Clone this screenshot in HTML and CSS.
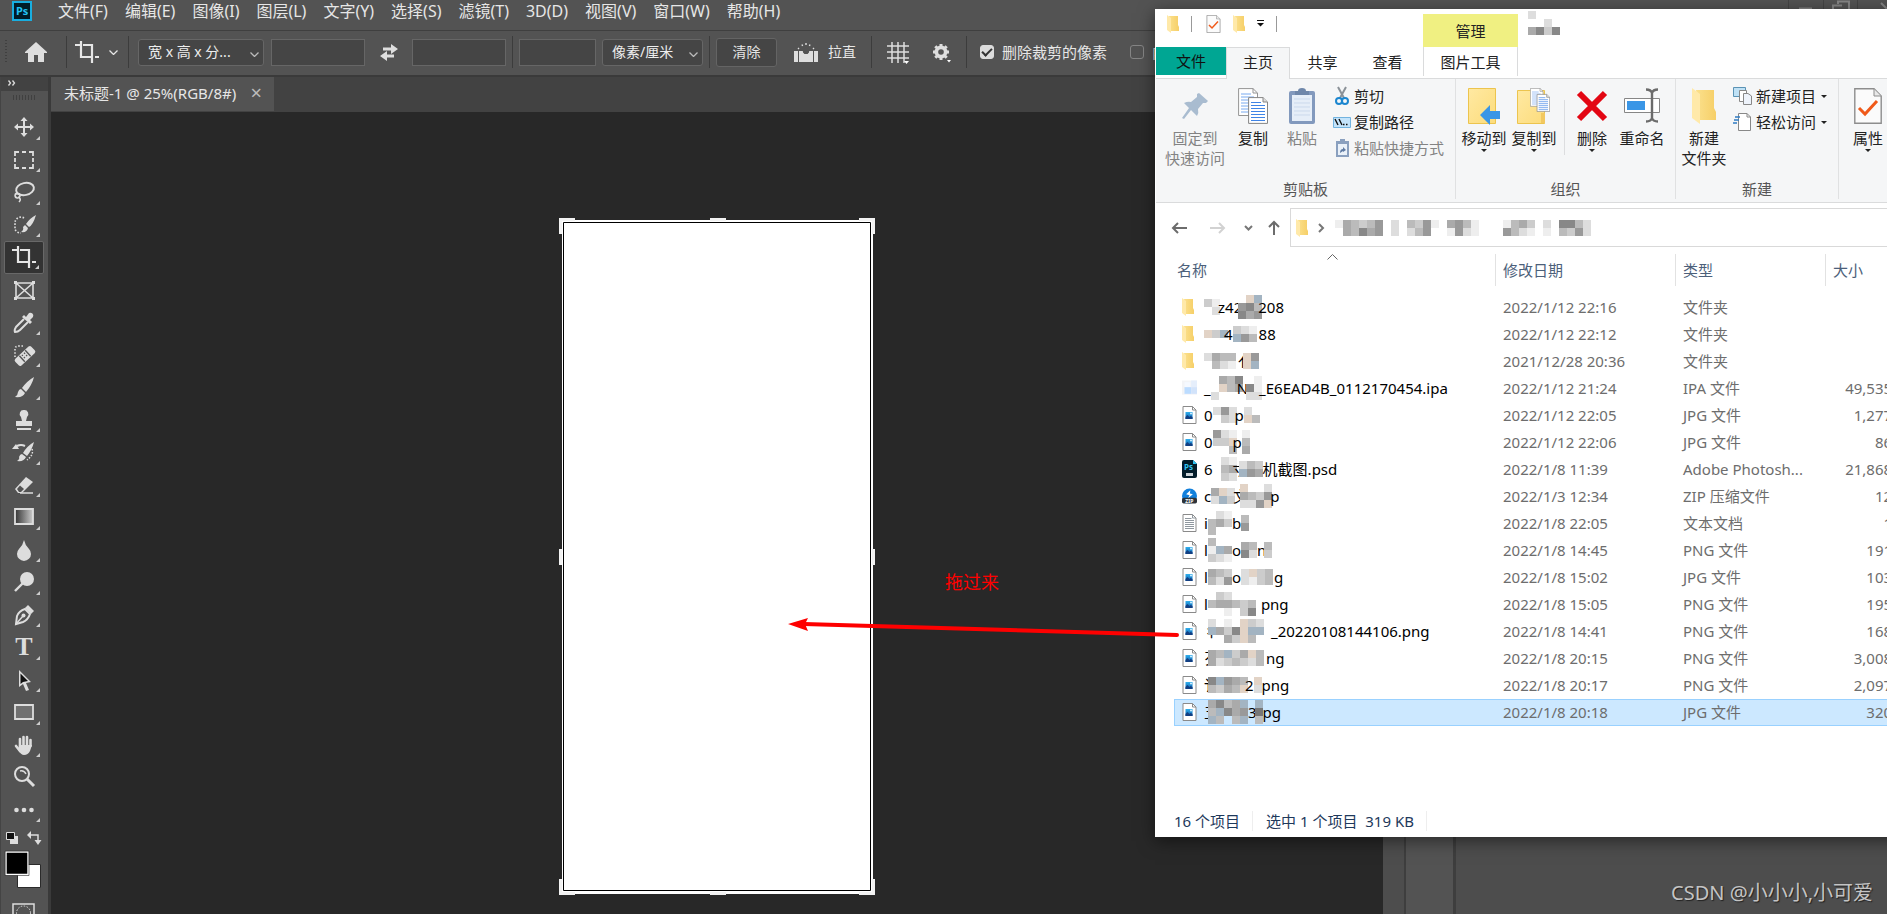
FILE: index.html
```html
<!DOCTYPE html>
<html lang="zh-CN">
<head>
<meta charset="utf-8">
<title>未标题-1</title>
<link rel="stylesheet" href="styles.css">
</head>
<body>
<svg width="0" height="0" class="defs" aria-hidden="true">
  <defs>
    <linearGradient id="gold" x1="0" x2="1"><stop offset="0" stop-color="#fbe08c"/><stop offset="1" stop-color="#f6cf68"/></linearGradient>
    <linearGradient id="sheet" x1="0" x2="1" y2="1"><stop offset="0" stop-color="#ffe9a2"/><stop offset="1" stop-color="#fcdc7c"/></linearGradient>
    <linearGradient id="fade" x1="0" x2="1"><stop offset="0" stop-color="#333"/><stop offset="1" stop-color="#ccc"/></linearGradient>
    <linearGradient id="sky" x1="0" y1="0" x2="0" y2="1"><stop offset="0" stop-color="#2fb0ee"/><stop offset="1" stop-color="#0c5cad"/></linearGradient>
    <symbol id="folder" viewBox="0 0 12 18"><path d="M2 1H11V10L12 12V16H4Z" fill="url(#gold)"/><path d="M0 0L4 3V18L0 15Z" fill="#ffe9a9"/></symbol>
    <symbol id="chevron" viewBox="0 0 9 5"><path d="M.5 .5L4.500 4.500L8.500 .5" fill="none" stroke="currentColor" stroke-width="1.300"/></symbol>
    <symbol id="crop" viewBox="0 0 24 22"><path d="M6 0V16H17M0 4H5M8 4H17V22M20 16H24" fill="none" stroke="currentColor" stroke-width="2.200"/></symbol>
    <symbol id="image" viewBox="0 0 14 18"><path d="M.5 .5H10L13.500 4V17.500H.5Z" fill="#fff" stroke="#8a8a8a"/><path d="M10 .5V4H13.500" fill="none" stroke="#8a8a8a"/><path d="M3 6H10V13H3Z" fill="url(#sky)"/><path d="M3 11L5 9L7 11L8 10L10 11V13H3Z" fill="#123f82"/><circle cx="8.500" cy="7.500" r="1" fill="#d8f2ff"/></symbol>
    <symbol id="text" viewBox="0 0 14 18"><path d="M.5 .5H10L13.500 4V17.500H.5Z" fill="#fff" stroke="#8a8a8a"/><path d="M10 .5V4H13.500M2.500 4.500H9M2.500 6.500H11.500M2.500 8.500H11.500M2.500 10.500H11.500M2.500 12.500H11.500M2.500 14.500H11.500" fill="none" stroke="#8f979e"/></symbol>
    <symbol id="psd" viewBox="0 0 15 18"><path d="M2 0H11L15 4V16A2 2 0 0 1 13 18H2A2 2 0 0 1 0 16V2A2 2 0 0 1 2 0Z" fill="#031d2b"/><path d="M11 0L15 4H11Z" fill="#2bc4f3"/><text x="2" y="10" font-size="8" font-weight="700" fill="#31c5f4">Ps</text><path d="M4 13H11V16H4Z" fill="#cbd3d8"/></symbol>
    <symbol id="zip" viewBox="0 0 18 18"><circle cx="9" cy="9" r="9" fill="#1280dc"/><path d="M10 2L5 7L9 8L7 12L13 7L9.500 6Z" fill="#fff"/><rect y="11" width="18" height="7" rx="2" fill="#2d3339"/><text x="4" y="17" font-size="6" font-weight="700" fill="#fff">ZIP</text></symbol>
    <symbol id="ipa" viewBox="0 0 18 18"><path d="M0 0H18V17H0Z" fill="#f3f4f6"/><path d="M3 2H10V8H3Z" fill="#f5f9ff"/><path d="M3 8H11V16H3Z" fill="#bcdcff"/><path d="M11 0H18V8H11Z" fill="#e5eefb"/><path d="M11 8H18V16H11Z" fill="#d2e3fa"/></symbol>
    <symbol id="checkdoc" viewBox="0 0 28 36"><path d="M.8 .8H20L27.200 8V35.200H.8Z" fill="#fbfbfb" stroke="#8d8d8d" stroke-width="1.400"/><path d="M20 1V8H27" fill="#e8e8e8" stroke="#8d8d8d"/><path d="M5 20L11 26L23 13" fill="none" stroke="#f05a1a" stroke-width="3"/></symbol>
    <symbol id="docs" viewBox="0 0 30 36"><path d="M.6 .6H15L19.500 5V27.500H.6Z" fill="#fff" stroke="#949494"/><path d="M15 .6V5H19.500" fill="none" stroke="#949494"/><path d="M3 6H13M3 9H16M3 12H16M3 15H16M3 18H16M3 21H16M3 24H16" stroke="#79aaf0"/><path d="M10.600 9.600H25L29.500 14V35.400H10.600Z" fill="#fff" stroke="#858585"/><path d="M25 9.600V14H29.500" fill="#ddd" stroke="#858585"/><path d="M13 14.500H23M13 17.500H27M13 20.500H27M13 23.500H27M13 26.500H27M13 29.500H27M13 32.500H27" stroke="#3f84e6"/></symbol>
    <symbol id="caret" viewBox="0 0 6 3"><path d="M0 0H6L3 3Z" fill="#222"/></symbol>
  </defs>
</svg>

<div class="app">
  <header class="menubar">
    <svg class="logo" width="20" height="20" viewBox="0 0 20 20"><rect x="1" y="1" width="18" height="18" fill="#001d29" stroke="#19aee0" stroke-width="2"/><text x="4" y="14" font-size="11" font-weight="700" fill="#22c3f5">Ps</text></svg>
    <nav class="menus">
      <button>文件(F)</button><button>编辑(E)</button><button>图像(I)</button><button>图层(L)</button><button>文字(Y)</button><button>选择(S)</button><button>滤镜(T)</button><button>3D(D)</button><button>视图(V)</button><button>窗口(W)</button><button>帮助(H)</button>
    </nav>
    <svg class="winctl" width="104" height="30" viewBox="0 0 104 30"><path d="M5.500 0V30M40.500 0V30M74.500 0V30" stroke="#444"/><path d="M16 8.500H29M50 14V5.500H59M55 4V1.500H66V9M98 3L110 15" fill="none" stroke="#858585" stroke-width="2"/></svg>
  </header>

  <section class="options" aria-label="裁剪选项">
    <span class="grip"></span>
    <button class="home" aria-label="主页"><svg width="22" height="20" viewBox="0 0 22 20"><path d="M11 0L22 10V11H19V20H13V13H9V20H3V11H0V10Z" fill="#dedede"/></svg></button>
    <i class="sep"></i>
    <button class="preset" aria-label="裁剪预设"><svg width="24" height="22"><use href="#crop"/></svg><svg width="9" height="5"><use href="#chevron"/></svg></button>
    <i class="sep"></i>
    <label class="pick pick-wide"><select aria-label="比例"><option>宽 x 高 x 分...</option></select><svg width="9" height="5"><use href="#chevron"/></svg></label>
    <input class="field" type="text" aria-label="宽度">
    <button class="swap" aria-label="交换高度和宽度"><svg width="18" height="17" viewBox="0 0 18 17"><path d="M11 0L18 5L11 10V6.500H3V3.500H11ZM7 7L0 12L7 17V13.500H14V10.500H7Z" fill="#dedede"/></svg></button>
    <input class="field" type="text" aria-label="高度">
    <i class="sep sep-tight"></i>
    <input class="field field-short" type="text" aria-label="分辨率">
    <label class="pick pick-unit"><select aria-label="单位"><option>像素/厘米</option></select><svg width="9" height="5"><use href="#chevron"/></svg></label>
    <i class="sep sep-tight"></i>
    <button class="clear">清除</button>
    <button class="level"><svg width="24" height="19" viewBox="0 0 24 19"><path d="M0 8H4V19H0ZM5 8H8L10 11H14L16 8H19V19H5ZM20 8H24V19H20Z" fill="#dedede"/><path d="M8 8A4 4 0 0 0 16 8" fill="none" stroke="#dedede" stroke-width="1.500"/><path d="M4 5L5 6M8 1.500L8.600 3M12 0V2M16 1.500L15.400 3M20 5L19 6" stroke="#dedede" stroke-width="1.400"/></svg>拉直</button>
    <i class="sep sep-wide"></i>
    <button aria-label="叠加选项"><svg width="22" height="23" viewBox="0 0 22 23"><path d="M5 1V22M11 1V22M17 1V22M0 5H22M0 11H22M0 17H22" stroke="#dedede" stroke-width="1.500"/><path d="M17 20H22L19.500 23Z" fill="#fff"/></svg></button>
    <button class="gear" aria-label="设置"><svg width="20" height="20" viewBox="0 0 20 20"><circle cx="10" cy="10" r="4.500" fill="none" stroke="#dedede" stroke-width="4"/><path d="M10 2V18M2 10H18M4.300 4.300L15.700 15.700M15.700 4.300L4.300 15.700" stroke="#dedede" stroke-width="3"/><circle cx="10" cy="10" r="2.800" fill="#535353"/><path d="M16 18H20L18 20.500Z" fill="#fff"/></svg></button>
    <i class="sep sep-wide"></i>
    <label class="tick"><input type="checkbox" checked><span>删除裁剪的像素</span></label>
    <label class="tick tick-next"><input type="checkbox"><span>内容识别</span></label>
  </section>

  <main class="work">
    <aside class="toolbar">
      <div class="expand"><svg width="8" height="6" viewBox="0 0 8 6"><path d="M.5 .5L2.500 3L.5 5.500M4.500 .5L6.500 3L4.500 5.500" fill="none" stroke="#ddd" stroke-width="1.300"/></svg></div>
      <div class="handle"></div>
      <div class="tools">
        <button class="more" aria-label="移动"><svg viewBox="0 0 24 24"><path d="M12 4V20M4 12H20" stroke="#ddd" stroke-width="2"/><path d="M12 2L15.500 6H8.500ZM12 22L15.500 18H8.500ZM2 12L6 8.500V15.500ZM22 12L18 8.500V15.500Z" fill="#ddd"/></svg></button>
        <button class="more" aria-label="矩形选框"><svg viewBox="0 0 24 24"><path d="M3 8V4H7M10 4H14M17 4H21V8M21 10V14M21 16V20H17M14 20H10M7 20H3V16M3 14V10" fill="none" stroke="#ddd" stroke-width="1.800"/></svg></button>
        <button class="more" aria-label="套索"><svg viewBox="0 0 24 24"><ellipse cx="13" cy="9" rx="9" ry="6" transform="rotate(-12 13 9)" fill="none" stroke="#ddd" stroke-width="2"/><path d="M5 13A2.500 2.500 0 1 0 8 16C8 13 4 13 3 15M6 17Q10 19 7 22" fill="none" stroke="#ddd" stroke-width="1.600"/></svg></button>
        <button class="more" aria-label="快速选择"><svg viewBox="0 0 24 24"><path d="M12 5A6 6 0 0 0 3 9V16A6 5 0 0 0 9 20" fill="none" stroke="#ddd" stroke-width="1.600" stroke-dasharray="1.600 1.600"/><path d="M24 2Q21 12 17 14L14 11Q18 5 24 2ZM13 12L16 15Q15 20 9 19Q12 17 11 14Z" fill="#ddd"/></svg></button>
        <button class="more active" aria-label="裁剪"><svg viewBox="0 0 24 24"><svg y="1" width="24" height="22"><use href="#crop"/></svg></svg></button>
        <button aria-label="图框"><svg viewBox="0 0 24 24"><path d="M4 5H21V20H4ZM4 5L21 20M21 5L4 20" fill="none" stroke="#ddd" stroke-width="1.600"/><path d="M2 3H5V6H2ZM20 3H23V6H20ZM2 19H5V22H2ZM20 19H23V22H20Z" fill="#ddd"/></svg></button>
        <button class="more" aria-label="吸管"><svg viewBox="0 0 24 24"><path d="M12 9L4 17Q2 20 3 22Q6 22 8 20L16 12" fill="none" stroke="#ddd" stroke-width="2"/><path d="M10 7L12 5L14 7L17 3A3 3 0 0 1 21 7L18 10L20 12L18 14Z" fill="#ddd"/></svg></button>
        <button class="more" aria-label="修复画笔"><svg viewBox="0 0 24 24"><path d="M3 14V6Q3 3 7 3H11" fill="none" stroke="#ddd" stroke-width="1.600" stroke-dasharray="1.600 1.600"/><g transform="rotate(-43 13 13)"><rect x="2" y="8.500" width="22" height="9" rx="2" fill="#ddd"/><path d="M9 9V17M17 9V17" stroke="#555" stroke-width="1.400"/><path d="M11.500 10V16M14.500 10V16" stroke="#555" stroke-width="1.300" stroke-dasharray="1.500"/></g></svg></button>
        <button class="more" aria-label="画笔"><svg viewBox="0 0 24 24"><path d="M22 2Q20 10 14 17L10 13Q15 6 22 2ZM9 14L13 18Q11 23 3 22Q6 20 6 17Q7 14 9 14Z" fill="#ddd"/></svg></button>
        <button class="more" aria-label="仿制图章"><svg viewBox="0 0 24 24"><path d="M12 2A4 4 0 0 1 15 9L14 13H20V18H4V13H10L9 9A4 4 0 0 1 12 2ZM5 20H19V22H5Z" fill="#ddd"/></svg></button>
        <button class="more" aria-label="历史记录画笔"><svg viewBox="0 0 24 24"><path d="M22 2Q20 10 15 16L11 13Q15 6 22 2ZM10 14L14 17Q12 22 5 21Q8 19 7 17Q8 14 10 14ZM0 9L4 4L7 9Z" fill="#ddd"/><path d="M5 6Q9 4 13 6" fill="none" stroke="#ddd" stroke-width="2"/><path d="M20 9Q22 15 15 20" fill="none" stroke="#ddd" stroke-width="1.500" stroke-dasharray="1.500"/></svg></button>
        <button class="more" aria-label="橡皮擦"><svg viewBox="0 0 24 24"><path d="M3 16L14 4L21 9L10 20H6Z" fill="#ddd"/><path d="M5 16L8 12.500L12 16L9 19H7Z" fill="#535353"/><path d="M8 20H21" stroke="#ddd" stroke-width="1.500"/></svg></button>
        <button class="more" aria-label="渐变"><svg viewBox="0 0 24 24"><path d="M3 4H21V19H3Z" fill="url(#fade)" stroke="#ddd" stroke-width="1.800"/></svg></button>
        <button class="more" aria-label="模糊"><svg viewBox="0 0 24 24"><path d="M12 2Q13 7 17 11A7 7 0 1 1 7 11Q11 7 12 2Z" fill="#ddd"/></svg></button>
        <button class="more" aria-label="减淡"><svg viewBox="0 0 24 24"><circle cx="15" cy="9" r="7" fill="#ddd"/><path d="M11 13L3 21" stroke="#ddd" stroke-width="2.400"/></svg></button>
        <button class="more" aria-label="钢笔"><svg viewBox="0 0 24 24"><path d="M4 21L5 13Q7 8 13 6L18 11Q16 17 11 19Z" fill="none" stroke="#ddd" stroke-width="2"/><path d="M13 5L16 2L22 8L19 11Z" fill="#ddd"/><path d="M4 21L11 13" stroke="#ddd" stroke-width="1.500"/><circle cx="11.500" cy="12.500" r="2" fill="#ddd"/></svg></button>
        <button class="more type" aria-label="文字">T</button>
        <button class="more" aria-label="路径选择"><svg viewBox="0 0 24 24"><path d="M7 2V19L11 16L14 23L17 22L14 15L19 14Z" fill="#ddd"/><path d="M8.500 5.500V16L11 14L16 13Z" fill="#111"/></svg></button>
        <button class="more" aria-label="矩形"><svg viewBox="0 0 24 24"><path d="M3 5H21V19H3Z" fill="#707070" stroke="#ddd" stroke-width="1.800"/></svg></button>
        <button class="more" aria-label="抓手"><svg viewBox="0 0 24 24"><path d="M8 13V6M11.500 12V4M15 12V4M18.500 13V7M4 13L8 18" stroke="#ddd" stroke-width="2.600" stroke-linecap="round"/><path d="M7 12H20L18 18Q16 22 12 22Q9 22 6 17Z" fill="#ddd"/></svg></button>
        <button aria-label="缩放"><svg viewBox="0 0 24 24"><circle cx="10" cy="9" r="7" fill="none" stroke="#ddd" stroke-width="2"/><path d="M8 6Q12 5 14 9" fill="none" stroke="#ddd" stroke-width="1.400"/><path d="M15 14L22 21" stroke="#ddd" stroke-width="3"/></svg></button>
        <button class="more" aria-label="编辑工具栏"><svg viewBox="0 0 24 24"><circle cx="4.500" cy="12" r="2.300" fill="#ddd"/><circle cx="12" cy="12" r="2.300" fill="#ddd"/><circle cx="19.500" cy="12" r="2.300" fill="#ddd"/></svg></button>
      </div>
      <svg class="swatches" width="44" height="84" viewBox="0 0 44 84"><path d="M6 10H14V18H6Z" fill="#ddd"/><path d="M2.500 6.500H10.500V13.500H2.500Z" fill="#111" stroke="#ddd"/><path d="M26 9H34V16" fill="none" stroke="#ddd" stroke-width="1.500"/><path d="M23 9L27 5V13ZM34 19L30.500 14H37.500Z" fill="#ddd"/><path d="M13.500 38.500H36.500V61.500H13.500Z" fill="#fff" stroke="#2b2b2b"/><path d="M2 26H24V48.500H2Z" fill="#000" stroke="#fff" stroke-width="1.400"/><path d="M1 25H25V49.500H1Z" fill="none" stroke="#2b2b2b" stroke-width=".6"/><path d="M9 78H30V92H9Z" fill="none" stroke="#ddd" stroke-width="1.500"/><circle cx="19.500" cy="87" r="7" fill="none" stroke="#ddd" stroke-dasharray="1.500"/></svg>
    </aside>

    <section class="document">
      <div class="tabs"><div class="tab"><span>未标题-1 @ 25%(RGB/8#)</span><button aria-label="关闭">×</button></div></div>
      <div class="stage">
        <svg class="frame" width="316" height="677" viewBox="0 0 316 677"><path d="M3 2H314V676H3Z" fill="#fff"/><path d="M4.500 4.500H311.500V672.500H4.500Z" fill="#fff" stroke="#000"/><path d="M0 0H16V3H3V16H0ZM151 0H167V3H151ZM300 0H316V16H313V3H300ZM0 331H3V347H0ZM313 331H316V347H313ZM0 661H3V674H16V677H0ZM151 674H167V677H151ZM300 674H313V661H316V677H300Z" fill="#f2f2f2"/></svg>
      </div>
    </section>
    <aside class="dock"><div class="rail"></div><div class="icons"></div><div class="panels"></div></aside>
  </main>
</div>

<p class="note">拖过来</p>

<section class="explorer" aria-label="文件资源管理器">
  <div class="titlebar">
    <div class="quick">
      <svg width="12" height="18"><use href="#folder"/></svg><i></i>
      <svg width="15" height="18"><use href="#checkdoc"/></svg>
      <svg width="12" height="18"><use href="#folder"/></svg>
      <svg width="7" height="7" viewBox="0 0 7 7"><path d="M0 .5H7" stroke="#111"/><path d="M0 3H7L3.500 6.500Z" fill="#111"/></svg><i></i>
    </div>
    <div class="manage">管理</div>
    <div class="wtitle" data-mosaic="32:d/..d/a8c8"></div>
  </div>
  <nav class="rtabs">
    <button class="file">文件</button><button class="current">主页</button><button>共享</button><button>查看</button><button class="tooltab">图片工具</button>
  </nav>
  <div class="ribbon">
    <div class="group clip">
      <div class="cmds">
        <button class="big off"><svg width="28" height="36" viewBox="0 0 28 36"><path d="M18 5L27 13L25 15H22L17 21Q18 25 16 28L10 22L3 31L1 30L8 20L3 15Q7 13 10 14L16 9V6Z" fill="#a9bcd0"/></svg>固定到<br>快速访问</button>
        <button class="big"><svg width="30" height="36"><use href="#docs"/></svg>复制</button>
        <button class="big off"><svg width="28" height="36" viewBox="0 0 28 36"><rect x="1" y="3" width="26" height="33" rx="2" fill="#8299bd"/><path d="M4 7H24V33H4Z" fill="#e6eef8"/><path d="M7 3H10A4 3 0 0 1 18 3H21V7H7Z" fill="#6f87aa"/><path d="M6 11H22M6 15H22M6 19H22M6 23H22M6 27H22" stroke="#cbd9ec"/></svg>粘贴</button>
        <div class="list">
          <button><svg width="18" height="18" viewBox="0 0 18 18"><path d="M5 0L11 11M13 0L7 11" stroke="#8b9298" stroke-width="2"/><circle cx="6" cy="14" r="3" fill="none" stroke="#1c86cf" stroke-width="2"/><circle cx="12" cy="14" r="3" fill="none" stroke="#1c86cf" stroke-width="2"/></svg>剪切</button>
          <button><svg width="18" height="18" viewBox="0 0 18 18"><path d="M.5 4.500H17.500V14.500H.5Z" fill="#c4e4fb" stroke="#72b3df"/><path d="M2 6L5 12M6 6L9 12M10 11.500H11.500M13 11.500H14.500" stroke="#111" stroke-width="1.400"/></svg>复制路径</button>
          <button class="off"><svg width="18" height="18" viewBox="0 0 18 18"><rect x="3" y="2" width="13" height="16" fill="#8aa0bf"/><path d="M5 5H14V16H5Z" fill="#eaf1f9"/><path d="M7 0H12V4H7Z" fill="#8aa0bf"/><path d="M7 14Q7 10 10 10V8L13 11L10 13V12" fill="#5f7ba3"/></svg>粘贴快捷方式</button>
        </div>
      </div>
      <div class="caption">剪贴板</div>
    </div>
    <div class="group org">
      <div class="cmds">
        <button class="big"><svg width="32" height="36" viewBox="0 0 32 36"><path d="M.5 .5H27.500V35.500H.5Z" fill="url(#sheet)" stroke="#ecc44e"/><path d="M12 27L22 17V23H32V31H22V37Z" fill="#3a96e6"/></svg>移动到<svg class="drop" width="6" height="3"><use href="#caret"/></svg></button>
        <button class="big"><svg width="34" height="36" viewBox="0 0 34 36"><path d="M.5 2.500H27.500V35.500H.5Z" fill="url(#sheet)" stroke="#ecc44e"/><path d="M24 35V25H28V35Z" fill="#f2c860"/><svg x="13" width="20" height="24"><use href="#docs"/></svg></svg>复制到<svg class="drop" width="6" height="3"><use href="#caret"/></svg></button>
        <i class="divide"></i>
        <button class="big"><svg width="32" height="36" viewBox="0 0 32 36"><path d="M3 5L29 31M29 5L3 31" stroke="#e30613" stroke-width="6"/></svg>删除<svg class="drop" width="6" height="3"><use href="#caret"/></svg></button>
        <button class="big"><svg width="36" height="36" viewBox="0 0 36 36"><path d="M.5 10.500H35.500V24.500H.5Z" fill="#fff" stroke="#868686"/><path d="M3 13H21V22H3Z" fill="#3a96e6"/><path d="M22 1.500Q27 1.500 28 5Q29 1.500 34 1.500M28 4V31M22 33.500Q27 33.500 28 30Q29 33.500 34 33.500" fill="none" stroke="#6b6b6b" stroke-width="2.400"/></svg>重命名</button>
      </div>
      <div class="caption">组织</div>
    </div>
    <div class="group new">
      <div class="cmds">
        <button class="big"><svg width="24" height="36" viewBox="0 0 12 18"><use href="#folder"/></svg>新建<br>文件夹</button>
        <div class="list">
          <button><svg width="20" height="18" viewBox="0 0 20 18"><path d="M.5 .5H12.500V9.500H.5Z" fill="#bfe1f5" stroke="#5a93b5"/><path d="M6.500 3.500H13.500V14.500H6.500Z" fill="#fff" stroke="#888"/><path d="M10.500 6.500H15L18.500 9V17.500H10.500Z" fill="#eef3fb" stroke="#888"/></svg>新建项目<svg width="6" height="3"><use href="#caret"/></svg></button>
          <button><svg width="20" height="18" viewBox="0 0 20 18"><path d="M5.500 .5H14L17.500 4V17.500H5.500Z" fill="#fff" stroke="#888"/><path d="M14 .5V4H17.500" fill="none" stroke="#888"/><path d="M2 4H7M1 7H6M0 10H4" stroke="#2f7cc4" stroke-width="1.500"/></svg>轻松访问<svg width="6" height="3"><use href="#caret"/></svg></button>
        </div>
      </div>
      <div class="caption">新建</div>
    </div>
    <div class="group last">
      <div class="cmds">
        <button class="big"><svg width="28" height="36"><use href="#checkdoc"/></svg>属性<svg class="drop" width="6" height="3"><use href="#caret"/></svg></button>
      </div>
    </div>
  </div>
  <div class="navrow">
    <div class="arrows">
      <button aria-label="后退"><svg width="16" height="12" viewBox="0 0 16 12"><path d="M16 6H2M7 1L2 6L7 11" fill="none" stroke="#6c6c6c" stroke-width="2"/></svg></button>
      <button aria-label="前进"><svg width="16" height="12" viewBox="0 0 16 12"><path d="M0 6H14M9 1L14 6L9 11" fill="none" stroke="#d2d2d2" stroke-width="2"/></svg></button>
      <button aria-label="最近位置"><svg width="9" height="6" viewBox="0 0 9 6"><path d="M1 1L4.500 4.500L8 1" fill="none" stroke="#777" stroke-width="2"/></svg></button>
      <button aria-label="向上"><svg width="12" height="15" viewBox="0 0 12 15"><path d="M6 15V2M1 7L6 2L11 7" fill="none" stroke="#6c6c6c" stroke-width="2"/></svg></button>
    </div>
    <div class="address">
      <svg width="12" height="18"><use href="#folder"/></svg>
      <svg width="7" height="10" viewBox="0 0 7 10"><path d="M1 1L5 5L1 9" fill="none" stroke="#777" stroke-width="2"/></svg>
      <span data-mosaic="256:eabcb9.d.bc9e.a9be.f.ebac.df88bd/fab8a9.d.db9ffe9de.f.9bde.e.bc9d"></span>
    </div>
  </div>
  <table class="files">
    <thead><tr><th class="c-name">名称<svg width="11" height="6" viewBox="0 0 11 6"><path d="M.5 5.500L5.500 .5L10.500 5.500" fill="none" stroke="#666"/></svg></th><th class="c-date">修改日期</th><th class="c-type">类型</th><th class="c-size">大小</th></tr></thead>
    <tbody id="rows"></tbody>
  </table>
  <footer class="status"><span>16 个项目</span><span>选中 1 个项目&nbsp; 319 KB</span></footer>
</section>

<svg class="arrow" width="392" height="30" viewBox="0 0 392 30"><path d="M16 8L389 19" stroke="#fe0000" stroke-width="4" stroke-linecap="round"/><path d="M0 8L20 2L17 8L20 15Z" fill="#fe0000"/></svg>
<p class="credit">CSDN @小小小,小可爱</p>
<script src="files.js"></script>
</body>
</html>
```

FILE: styles.css
```css
* { box-sizing: border-box; }
body { margin: 0; height: 100vh; overflow: hidden; position: relative; background: #282828; font: 15px/20px "Noto Sans", "Noto Sans CJK SC", sans-serif; }
button { margin: 0; padding: 0; border: 0; background: none; color: inherit; font: inherit; white-space: nowrap; }
p { margin: 0; }
svg { display: block; flex: none; overflow: visible; }
.defs { position: absolute; }

.app { height: 100vh; display: flex; flex-direction: column; color: #e6e6e6; background: #535353; }
.menubar { flex: none; height: 31px; padding-left: 12px; display: flex; align-items: flex-start; border-bottom: 1px solid #3f3f3f; overflow: hidden; }
.logo { margin-top: 1px; }
.menus { flex: 1; display: flex; gap: 17px; margin-left: 26px; font-size: 16px; line-height: 22px; }

.options { flex: none; height: 46px; padding-bottom: 2px; display: flex; align-items: center; border-bottom: 2px solid #3a3a3a; font-size: 14px; white-space: nowrap; overflow: hidden; }
.options > * { flex: none; }
.grip { width: 2px; height: 24px; margin-left: 5px; background: repeating-linear-gradient(#404040 0 1px, #535353 1px 3px); }
.home { width: 59px; padding-right: 2px; display: flex; justify-content: center; }
.sep { width: 1px; height: 32px; background: #3c3c3c; }
.sep-tight { margin: 0 6px; }
.sep-wide { margin: 0 15px; }
.preset { width: 61px; padding-right: 2px; display: flex; align-items: center; justify-content: center; gap: 10px; }
.pick { position: relative; height: 27px; border: 1px solid #666; border-radius: 3px; background: #454545; }
.pick-wide { width: 126px; margin: 0 7px 0 9px; }
.pick-unit { width: 101px; margin-left: 6px; }
.pick select { appearance: none; width: 100%; height: 100%; border: 0; padding: 0 20px 0 9px; background: none; color: #eee; font: inherit; }
.pick svg { position: absolute; right: 4px; top: 12px; color: #bbb; }
.field { width: 94px; height: 27px; border: 1px solid #666; background: #454545; color: #eee; }
.field-short { width: 77px; }
.swap { width: 47px; display: flex; justify-content: center; }
.clear { width: 61px; height: 29px; border: 1px solid #646464; border-radius: 3px; background: #454545; }
.level { margin-left: 17px; display: flex; align-items: center; gap: 10px; }
.gear { margin-left: 22px; }
.tick { display: flex; align-items: center; gap: 8px; font-size: 15px; }
.sep-wide + .tick { margin-left: -2px; }
.tick-next { margin-left: 23px; }
.tick input { appearance: none; width: 14px; height: 14px; margin: 0; border: 1px solid #858585; border-radius: 3px; display: grid; place-items: center; }
.tick input:checked { background: #dcdcdc; border-color: #dcdcdc; }
.tick input:checked::before { content: ""; width: 8px; height: 4px; border: solid #333; border-width: 0 0 2px 2px; transform: translateY(-1px) rotate(-45deg); }

.work { flex: 1; min-height: 0; display: flex; }
.toolbar { flex: none; width: 51px; display: flex; flex-direction: column; border-left: 1px solid #444; border-right: 3px solid #3a3a3a; overflow: hidden; }
.expand { flex: none; height: 14px; padding: 3px 0 0 7px; background: #424242; }
.handle { flex: none; width: 22px; height: 5px; margin: 4px 0 11px 12px; background: repeating-linear-gradient(90deg, #404040 0 1px, #535353 1px 3px); }
.tools { flex: none; height: 715px; display: grid; grid-template-rows: repeat(22, 1fr); }
.tools button { position: relative; width: 40px; margin-left: 3px; display: grid; place-items: center; }
.tools svg { width: 24px; height: 24px; }
.tools svg svg { height: 22px; }
.tools .more::after { content: ""; position: absolute; right: 4px; bottom: 4px; border: solid transparent; border-width: 2px; border-right-color: #ccc; border-bottom-color: #ccc; }
.tools .active { border: 1px solid #686868; border-radius: 2px; background: #333; }
.tools .type { font: 700 26px/30px "Liberation Serif", serif; color: #ddd; }
.swatches { margin-left: 3px; }

.document { flex: 1; display: flex; flex-direction: column; background: #282828; }
.tabs { flex: none; height: 35px; background: #424242; }
.tab { width: 223px; height: 34px; padding: 0 12px 2px 13px; display: flex; align-items: center; justify-content: space-between; background: #535353; font-size: 15px; }
.tab button { color: #bbb; font-size: 20px; }
.stage { flex: 1; position: relative; }
.frame { position: absolute; left: 508px; top: 106px; }

.dock { flex: none; width: 504px; display: flex; background: #4d4d4d; }
.rail { width: 21px; }
.icons { width: 52px; border: solid #3e3e3e; border-width: 0 3px 0 2px; background: #535353; }

.note { position: absolute; left: 945px; top: 570px; color: #f00; font-size: 18px; line-height: 24px; }
.arrow { position: absolute; left: 788px; top: 616px; }
.credit { position: absolute; right: 14px; bottom: 7px; color: #c4c4c4; font-size: 20px; line-height: 28px; text-shadow: 1px 1px 1px #222; }

.explorer { position: absolute; left: 1155px; top: 9px; right: -40px; bottom: 77px; padding-left: 1px; display: flex; flex-direction: column; background: #fff; color: #222; box-shadow: 0 4px 16px rgba(0, 0, 0, .5); }
.titlebar { flex: none; height: 38px; display: flex; }
.quick { width: 267px; padding: 0 0 9px 11px; display: flex; align-items: center; gap: 12px; }
.quick i { width: 1px; height: 16px; background: #999; }
.quick i + svg { margin-left: 2px; }
.manage { width: 95px; margin-top: 5px; background: #f0f082; text-align: center; line-height: 34px; }
.wtitle { margin: 2px 0 0 10px; }
.rtabs { flex: none; height: 32px; display: flex; border-bottom: 1px solid #dadbdc; }
.rtabs button { width: 65px; height: 29px; }
.rtabs .file { width: 70px; height: 28px; background: #00a693; color: #111; }
.rtabs .current { width: 64px; height: 32px; padding-bottom: 3px; border: 1px solid #dadbdc; border-bottom: 0; background: #f5f6f7; }
.rtabs .tooltab { width: 95px; margin-left: 3px; border: solid #dadbdc; border-width: 0 1px; }

.ribbon { flex: none; height: 124px; display: flex; background: #f5f6f7; border-bottom: 1px solid #dadbdc; }
.group { height: 120px; display: flex; flex-direction: column; justify-content: space-between; border-right: 1px solid #e0e1e2; }
.clip { width: 300px; }
.org { width: 220px; }
.new { width: 163px; }
.last { flex: 1; border: 0; }
.cmds { display: flex; align-items: flex-start; }
.caption { text-align: center; color: #555; }
.big { width: 50px; padding-top: 9px; display: block; }
.big > svg:first-child { margin: 0 auto 4px; }
.drop { margin: 1px auto 0; }
.off { color: #838383; }
.clip .big { width: 60px; }
.clip .big:first-child { width: 78px; }
.clip .big:nth-child(2) { width: 38px; }
.org .cmds { padding-left: 3px; }
.divide { width: 1px; height: 55px; margin: 21px 2px 0 5px; background: #dcdddf; }
.new .big { width: 56px; }
.last .big { width: 58px; }
.list { padding: 4px 0 0 1px; display: flex; flex-direction: column; align-items: flex-start; }
.list button { height: 26px; display: flex; align-items: center; gap: 3px; }
.new .list button svg:last-child { margin-left: 2px; }

.navrow { flex: none; height: 51px; padding-top: 5px; display: flex; align-items: flex-start; }
.arrows { width: 134px; height: 39px; padding-left: 15px; display: flex; align-items: center; }
.arrows button { margin-right: 18px; }
.arrows button:first-child { margin-right: 23px; }
.arrows button:nth-child(3) { margin-right: 15px; }
.address { flex: 1; height: 39px; padding-left: 5px; display: flex; align-items: center; gap: 10px; border: 1px solid #d9d9d9; border-right: 0; }

.files { flex: none; width: 745px; margin-left: 18px; table-layout: fixed; border-spacing: 0; }
.files th { position: relative; height: 32px; padding: 0 0 0 7px; border-left: 1px solid #e2e2e2; color: #4c607a; font-weight: 400; text-align: left; }
.files .c-name { width: 321px; padding-left: 3px; border: 0; }
.c-name svg { position: absolute; left: 153px; top: 0; }
.c-date { width: 180px; }
.c-type { width: 150px; }
.files tbody::before { content: ""; display: block; height: 8px; }
.files td { height: 27px; padding: 0 0 1px 8px; color: #6d6d6d; white-space: nowrap; }
.files td:last-child { padding: 0 4px 1px 0; text-align: right; }
.files .selected { background: #cce8ff; outline: 1px solid #99d1ff; outline-offset: -1px; }
.fname { display: flex; align-items: center; height: 26px; color: #000; }
.ficon { flex: none; width: 22px; }
.smear { flex: none; height: 24px; }

.status { margin-top: auto; height: 32px; padding-left: 18px; display: flex; align-items: center; gap: 13px; color: #1e395b; }
.status span { padding-right: 12px; border-right: 1px solid #eee; }
```

FILE: files.js
```js
// Names mix readable pieces with "#width:cells:overlap" pieces, which draw censored
// blocks of 8px cells; the overlap covers the end of the piece before.
var files = [
  ["folder", ["#14:ce/.d", "z42", "#20:.ts/98b/8a9:4", "208"], "2022/1/12 22:16", "文件夹", ""],
  ["folder", ["#20:tcs", "4", "#26:cde/s9b", "88"], "2022/1/12 22:12", "文件夹", ""],
  ["folder", ["#34:dabb/.bde", "亻", "#16:t9/ts:10"], "2021/12/28 20:36", "文件夹", ""],
  ["ipa", ["_", "#26:.ab8/.tba/d..", "N", "#13:.e/8e/dd:2", "_E6EAD4B_0112170454.ipa"], "2022/1/12 21:24", "IPA 文件", "49,535 KB"],
  ["image", ["0", "#22:d9d/.cd", "p", "#14:d/tb"], "2022/1/12 22:05", "JPG 文件", "1,277 KB"],
  ["image", ["0", "#20:9de/cct/..b", "p", "#8:e/b/a"], "2022/1/12 22:06", "JPG 文件", "86 KB"],
  ["psd", ["6", "#20:.de/.ba/.cd", "寸", "#24:dbc/s9a:9", "机截图.psd"], "2022/1/8 11:39", "Adobe Photosh...", "21,868 KB"],
  ["zip", ["c", "#22:atd/dsc", "文", "#30:t..d/abc9/dd9t:8", "p"], "2022/1/3 12:34", "ZIP 压缩文件", "12 KB"],
  ["text", ["i", "#24:.de/bac/b..", "b", "#8:b/9"], "2022/1/8 22:05", "文本文档", "1 KB"],
  ["image", ["l", "#24:b../esa/cde", "o", "#16:ab/8d", "n", "#9:b/c:2"], "2022/1/8 14:45", "PNG 文件", "191 KB"],
  ["image", ["l", "#24:abc/bd9", "o", "#33:dtcb/decb", "g"], "2022/1/8 15:02", "JPG 文件", "103 KB"],
  ["image", ["l", "#53:.cd.../baabcb/..e.c8"], "2022/1/8 15:05", "PNG 文件", "195 KB"],
  ["image", ["彳", "#63:d.e.tcd/sac8tss/..actb.:11", "_20220108144106.png"], "2022/1/8 14:41", "PNG 文件", "168 KB"],
  ["image", ["歹", "#58:abscatb/adcbcdb:11", "ng"], "2022/1/8 20:15", "PNG 文件", "3,008 KB"],
  ["image", ["讠", "#37:8s9ab/bcabt:11", "2", "#8:t/d", "png"], "2022/1/8 20:17", "PNG 文件", "2,097 KB"],
  ["image", ["五", "#40:a8bas/bs8a9/sb.bs:11", "3", "#8:s/7/b:2", "pg"], "2022/1/8 20:18", "JPG 文件", "320 KB"]
];
files[11][1].push("png");
var tints = { s: "#a3b4c2", t: "#e2d3c6" };

function smear(spec) {
  var parts = spec.split(":");
  var rows = parts[1].split("/");
  var body = "";
  rows.forEach(function (row, y) {
    row.split("").forEach(function (c, x) {
      if (c !== ".") {
        body += '<rect x="' + x * 8 + '" y="' + y * 8 + '" width="8" height="8" fill="' + (tints[c] || "#" + c + c + c) + '"/>';
      }
    });
  });
  var h = rows.length * 8;
  return '<svg class="smear" width="' + parts[0] + '" style="height:' + h + "px;margin-left:-" + (parts[2] || 0) + 'px">' + body + "</svg>";
}

document.querySelectorAll("[data-mosaic]").forEach(function (el) {
  el.innerHTML = smear(el.dataset.mosaic);
});

document.getElementById("rows").innerHTML = files.map(function (f, i) {
  var name = f[1].map(function (p) {
    return p[0] === "#" ? smear(p.slice(1)) : "<span>" + p + "</span>";
  }).join("");
  return '<tr class="' + (i === 15 ? "selected" : "") + '"><td><div class="fname"><span class="ficon"><svg width="' + (f[0] === "folder" ? 12 : 15) + '" height="18"><use href="#' + f[0] + '"/></svg></span>' + name + "</div></td><td>" + f[2] + "</td><td>" + f[3] + "</td><td>" + f[4] + "</td></tr>";
}).join("");
```
